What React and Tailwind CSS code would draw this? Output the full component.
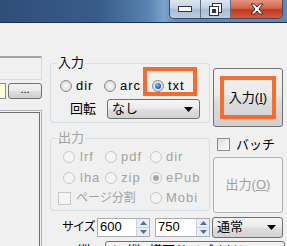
function Radio({ checked, disabled }) {
  return (
    <span
      className={
        "flex h-[12px] w-[12px] shrink-0 items-center justify-center rounded-full border " +
        (disabled
          ? "border-[#c8c8c8] bg-[#f4f4f4]"
          : "border-[#8a8c8e] bg-[radial-gradient(circle,#fafafa_0%,#e2e2e2_60%,#c9c9c9_100%)]")
      }
    >
      {checked && (
        <span
          className={
            "h-[6px] w-[6px] rounded-full " +
            (disabled
              ? "bg-[#a8a8a8]"
              : "bg-[radial-gradient(circle_at_40%_35%,#7fc3ff_0%,#1f6fd0_55%,#0b3d80_100%)]")
          }
        />
      )}
    </span>
  );
}

function Check({ disabled }) {
  return (
    <span
      className={
        "h-[13px] w-[13px] shrink-0 border " +
        (disabled ? "border-[#c8c8c8] bg-[#f4f4f4]" : "border-[#8a8c8e] bg-[linear-gradient(135deg,#dcdcdc,#ffffff)]")
      }
    />
  );
}

function Spinner() {
  return (
    <span className="flex h-full w-[13px] flex-col border-l border-[#c9d3df] bg-[#e9eef4]">
      <span className="flex flex-1 items-center justify-center border-b border-[#c9d3df]">
        <svg width="7" height="4" viewBox="0 0 7 4">
          <path d="M0 4 L3.5 0 L7 4 Z" fill="#4d6fa8" />
        </svg>
      </span>
      <span className="flex flex-1 items-center justify-center">
        <svg width="7" height="4" viewBox="0 0 7 4">
          <path d="M0 0 L3.5 4 L7 0 Z" fill="#4d6fa8" />
        </svg>
      </span>
    </span>
  );
}

function Arrow() {
  return (
    <svg width="9" height="5" viewBox="0 0 9 5">
      <path d="M0 0 L9 0 L4.5 5 Z" fill="#000" />
    </svg>
  );
}

export default function App() {
  return (
    <div className="relative h-[246px] w-[287px] overflow-hidden bg-[#f0f0f0] font-['Liberation_Sans','Noto_Sans_CJK_JP',sans-serif] text-[12px] text-black">
      {/* title bar */}
      <div className="flex h-[23px] justify-end border-b border-[#1d3048] bg-[linear-gradient(90deg,#2e4e77_0%,#395d8a_35%,#5a84b3_52%,#7ba3cc_57%,#5f89b8_62%)] pr-[4px]">
        <div className="flex h-[19px] overflow-hidden rounded-b-[5px] border border-t-0 border-[#3a4a60]">
          <div className="flex w-[31px] items-center justify-center border-r border-[#5d6f86] bg-[linear-gradient(180deg,#dde6f0_0%,#c2d1e2_45%,#a8bdd4_55%,#bccde0_100%)]">
            <svg width="14" height="6" viewBox="0 0 14 6">
              <rect x="0.5" y="0.5" width="13" height="5" fill="#fff" stroke="#2c3544" />
            </svg>
          </div>
          <div className="flex w-[30px] items-center justify-center border-r border-[#5d6f86] bg-[linear-gradient(180deg,#dde6f0_0%,#c2d1e2_45%,#a8bdd4_55%,#bccde0_100%)]">
            <svg width="13" height="13" viewBox="0 0 13 13">
              <rect x="3.5" y="0.5" width="9" height="9" fill="#fff" stroke="#2c3544" />
              <rect x="0.5" y="3.5" width="9" height="9" fill="#fff" stroke="#2c3544" />
              <rect x="3" y="6" width="4" height="4" fill="#2c3544" />
            </svg>
          </div>
          <div className="flex w-[51px] items-center justify-center bg-[linear-gradient(180deg,#e89582_0%,#d4634b_45%,#c2381f_55%,#d65a3e_100%)]">
            <svg width="14" height="12" viewBox="0 0 14 12">
              <path
                d="M1 1 L4.5 1 L7 4 L9.5 1 L13 1 L9 6 L13 11 L9.5 11 L7 8 L4.5 11 L1 11 L5 6 Z"
                fill="#fff"
                stroke="#3a2a28"
                strokeWidth="1"
                strokeLinejoin="round"
              />
            </svg>
          </div>
        </div>
      </div>

      <div className="flex">
        {/* left column */}
        <div className="flex w-[42px] shrink-0 flex-col">
          <div className="mt-[33px] h-[24px] border-r border-b border-t-2 border-[#dadada] border-t-[#a2a2a2]" />
          <div className="mt-[3px] flex h-[16px]">
            <div className="w-[6px] border border-l-0 border-[#8d8d8d] bg-[#ffffe2]" />
            <div className="ml-[2px] flex flex-1 items-center justify-center rounded-[3px] border border-[#707070] bg-[linear-gradient(180deg,#f2f2f2_0%,#ebebeb_45%,#dddddd_55%,#cfcfcf_100%)] pb-[4px] text-[11px]">
              ...
            </div>
          </div>
          <div className="mt-[11px] h-[150px] border-t border-r border-[#b0b0b0] pt-[1px] pr-[1px]">
            <div className="h-full border-t border-r border-[#6e6e6e]" />
          </div>
        </div>

        {/* right area */}
        <div className="ml-[8px] flex w-[237px] flex-col">
          <div className="flex">
            {/* middle column */}
            <div className="flex w-[160px] shrink-0 flex-col">
              <fieldset className="mt-[30px] h-[70px] rounded-[3px] border border-[#d5dfe5]">
                <legend className="ml-[6px] px-[1px] text-[13px] leading-[20px]">入力</legend>
                <div className="mt-[4px] flex h-[18px] items-center pl-[9px] text-[13px] tracking-[1px]">
                  <span className="flex w-[44px] items-center gap-[4px]">
                    <Radio />
                    <span>dir</span>
                  </span>
                  <span className="flex w-[48px] items-center gap-[4px]">
                    <Radio />
                    <span>arc</span>
                  </span>
                  <span className="relative flex items-center gap-[4px]">
                    <Radio checked />
                    <span>txt</span>
                    <span className="absolute top-[-9px] left-[-9px] h-[29px] w-[54px] border-[4px] border-[#fd6a2a]" />
                  </span>
                </div>
                <div className="mt-[4px] flex h-[20px] items-center pl-[19px] text-[13px]">
                  <span className="w-[37px]">回転</span>
                  <span className="flex h-[20px] w-[93px] items-center justify-between rounded-[3px] border border-[#707070] bg-[linear-gradient(180deg,#f4f4f4_0%,#ececec_45%,#dedede_55%,#d2d2d2_100%)] pr-[6px] pl-[4px]">
                    <span>なし</span>
                    <Arrow />
                  </span>
                </div>
              </fieldset>

              <fieldset className="mt-[5px] h-[83px] rounded-[3px] border border-[#d5dfe5] text-[#a3a3a3]">
                <legend className="ml-[6px] px-[1px] text-[13px] leading-[20px]">出力</legend>
                <div className="flex h-[18px] items-center pl-[12px] text-[13px] tracking-[1px]">
                  <span className="flex w-[42px] items-center gap-[5px]">
                    <Radio disabled />
                    <span>lrf</span>
                  </span>
                  <span className="flex w-[45px] items-center gap-[4px]">
                    <Radio disabled />
                    <span>pdf</span>
                  </span>
                  <span className="flex items-center gap-[4px]">
                    <Radio disabled />
                    <span>dir</span>
                  </span>
                </div>
                <div className="mt-[3px] flex h-[18px] items-center pl-[12px] text-[13px] tracking-[1px]">
                  <span className="flex w-[42px] items-center gap-[5px]">
                    <Radio disabled />
                    <span>lha</span>
                  </span>
                  <span className="flex w-[45px] items-center gap-[4px]">
                    <Radio disabled />
                    <span>zip</span>
                  </span>
                  <span className="flex items-center gap-[4px]">
                    <Radio disabled checked />
                    <span>ePub</span>
                  </span>
                </div>
                <div className="mt-[2px] flex h-[18px] items-center pl-[7px] text-[13px]">
                  <span className="flex w-[92px] items-center gap-[5px]">
                    <Check disabled />
                    <span className="text-[12px]">ページ分割</span>
                  </span>
                  <span className="flex items-center gap-[4px] tracking-[1px]">
                    <Radio disabled />
                    <span>Mobi</span>
                  </span>
                </div>
              </fieldset>
            </div>

            {/* right column */}
            <div className="ml-[3px] flex w-[70px] flex-col">
              <div className="mt-[45px] flex h-[59px] items-center justify-center rounded-[3px] border border-[#707070] bg-[linear-gradient(180deg,#f2f2f2_0%,#ebebeb_45%,#dddddd_55%,#cfcfcf_100%)]">
                <div className="flex h-[43px] w-[56px] items-center justify-center border-[4px] border-[#fd6a2a] text-[13px]">
                  入力(<span className="underline">I</span>)
                </div>
              </div>
              <div className="mt-[11px] flex h-[13px] items-center gap-[6px] pl-[4px] text-[13px]">
                <Check />
                <span>バッチ</span>
              </div>
              <div className="mt-[6px] flex h-[56px] items-center justify-center rounded-[3px] border border-[#adb2b5] bg-[#f4f4f4] text-[13px] text-[#a0a0a0]">
                出力(<span className="underline">O</span>)
              </div>
            </div>
          </div>

          {/* size row */}
          <div className="mt-[3px] flex h-[22px] items-center pl-[12px] text-[13px]">
            <span className="w-[35px] whitespace-nowrap text-[12px] tracking-[-1px]">サイズ</span>
            <span className="flex h-[19px] w-[53px] items-center border border-[#abadb3] bg-white">
              <span className="flex-1 pl-[2px]">600</span>
              <Spinner />
            </span>
            <span className="ml-[5px] flex h-[19px] w-[55px] items-center border border-[#abadb3] bg-white">
              <span className="flex-1 pl-[2px]">750</span>
              <Spinner />
            </span>
            <span className="ml-[2px] flex h-[21px] w-[71px] items-center justify-between rounded-[3px] border border-[#707070] bg-[linear-gradient(180deg,#f4f4f4_0%,#ececec_45%,#dedede_55%,#d2d2d2_100%)] pr-[6px] pl-[4px]">
              <span>通常</span>
              <Arrow />
            </span>
          </div>

          {/* bottom row (cut off by the window edge) */}
          <div className="mt-[3px] flex h-[20px] items-start text-[13px]">
            <span className="ml-[23px] w-[32px] whitespace-nowrap">(縦):</span>
            <span className="flex h-[20px] w-[180px] items-center whitespace-nowrap rounded-[3px] border border-[#707070] bg-[linear-gradient(180deg,#f4f4f4_0%,#ececec_45%,#dedede_55%,#d2d2d2_100%)] pl-[4px]">
              ト(縦)(横画サイズ)以ド
            </span>
          </div>
        </div>
      </div>
    </div>
  );
}
